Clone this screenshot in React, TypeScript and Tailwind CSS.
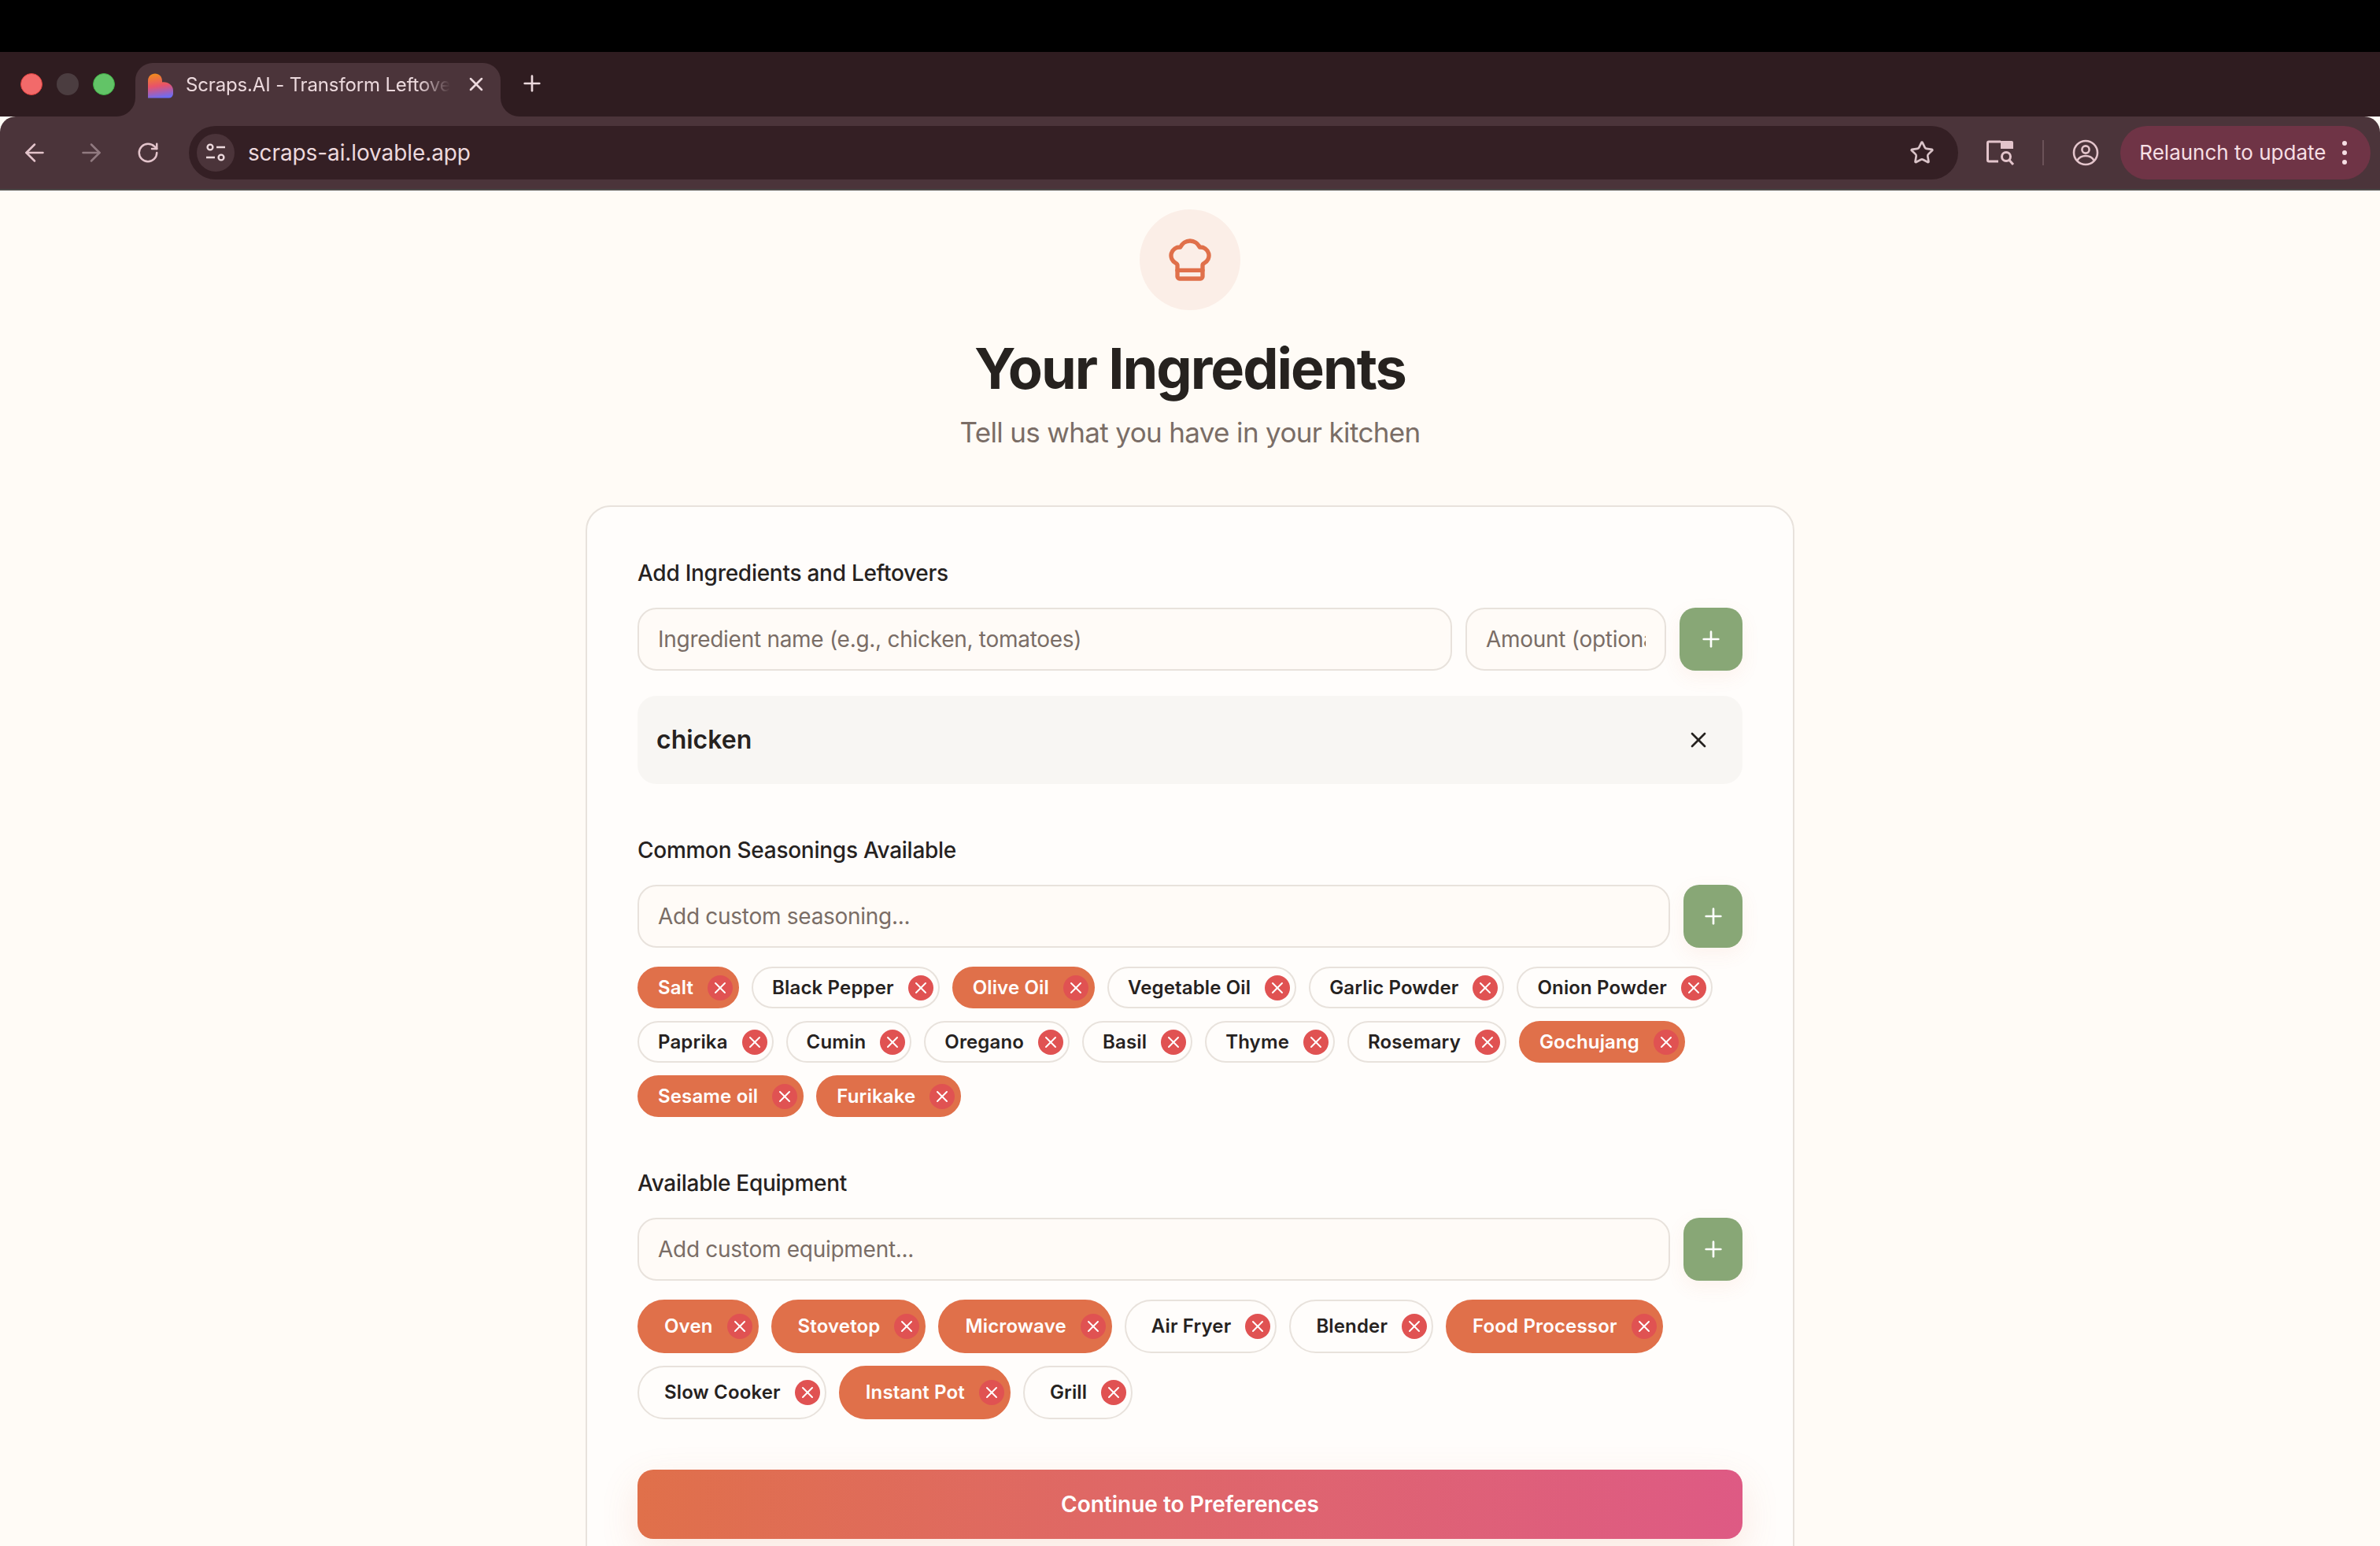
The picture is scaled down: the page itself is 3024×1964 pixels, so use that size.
import React from 'react';
import { ArrowLeft, ArrowRight, ChefHat, Plus, RotateCw, Star, X } from 'lucide-react';

const seasonings = [
  { name: 'Salt', on: true },
  { name: 'Black Pepper', on: false },
  { name: 'Olive Oil', on: true },
  { name: 'Vegetable Oil', on: false },
  { name: 'Garlic Powder', on: false },
  { name: 'Onion Powder', on: false },
  { name: 'Paprika', on: false },
  { name: 'Cumin', on: false },
  { name: 'Oregano', on: false },
  { name: 'Basil', on: false },
  { name: 'Thyme', on: false },
  { name: 'Rosemary', on: false },
  { name: 'Gochujang', on: true },
  { name: 'Sesame oil', on: true },
  { name: 'Furikake', on: true },
];

const equipment = [
  { name: 'Oven', on: true },
  { name: 'Stovetop', on: true },
  { name: 'Microwave', on: true },
  { name: 'Air Fryer', on: false },
  { name: 'Blender', on: false },
  { name: 'Food Processor', on: true },
  { name: 'Slow Cooker', on: false },
  { name: 'Instant Pot', on: true },
  { name: 'Grill', on: false },
];

const Favicon = () => (
  <svg width="32" height="32" viewBox="0 0 32 32" className="shrink-0">
    <defs>
      <linearGradient id="fav" x1="0.35" y1="0" x2="0.5" y2="1">
        <stop offset="0" stopColor="#f08a1e" />
        <stop offset="0.5" stopColor="#e8526a" />
        <stop offset="1" stopColor="#6a6cf6" />
      </linearGradient>
    </defs>
    <path
      d="M0 10C0 4 4 0.5 9 0.5S18 4 18 10V11.5C25 10.5 32 15 32 22V26a5.5 5.5 0 0 1-5.5 5.5H0Z"
      fill="url(#fav)"
    />
  </svg>
);

const TuneIcon = () => (
  <svg width="26" height="26" viewBox="0 0 26 26" fill="none" stroke="#ecd9dd" strokeWidth="2.4">
    <circle cx="6" cy="6" r="3.4" />
    <path d="M14 6h11M1 19h11" />
    <circle cx="20" cy="19" r="3.4" />
  </svg>
);

const SidePanelSearch = () => (
  <svg width="36" height="32" viewBox="0 0 36 32" fill="none">
    <path d="M18 2H3a1.5 1.5 0 0 0-1.5 1.5v22A1.5 1.5 0 0 0 3 27h12" stroke="#e3c4cb" strokeWidth="3" />
    <path d="M18 1h14a2 2 0 0 1 2 2v8H18Z" fill="#e3c4cb" />
    <circle cx="25" cy="21" r="5.5" stroke="#e3c4cb" strokeWidth="3" />
    <path d="M29 25.5l5 5.5" stroke="#e3c4cb" strokeWidth="3" />
  </svg>
);

const ProfileIcon = () => (
  <svg width="34" height="34" viewBox="0 0 34 34" fill="none" stroke="#e3c4cb" strokeWidth="2.6">
    <circle cx="17" cy="17" r="15" />
    <circle cx="17" cy="13" r="4.6" />
    <path d="M6.5 26.5C9 22.5 13 21 17 21s8 1.5 10.5 5.5" />
  </svg>
);

const Chip = ({ name, on, big }: { name: string; on: boolean; big?: boolean }) => (
  <div
    className={`flex items-center rounded-full border-2 text-[24px] leading-[32px] font-semibold ${
      big ? 'h-[68px] pl-[32px] pr-[6px] gap-[18px]' : 'h-[53px] pl-[24px] pr-[6px] gap-[18px]'
    } ${on ? 'bg-[#e0704a] border-[#e0704a] text-white' : 'bg-[#fffdfb] border-[#e8e2dc] text-[#26221f]'}`}
  >
    <span className="tracking-[0.15px]">{name}</span>
    <span className="flex h-[32px] w-[32px] items-center justify-center rounded-full bg-[#e05252]">
      <X size={24} color="#ffffff" strokeWidth={2} />
    </span>
  </div>
);

const AddButton = ({ wide }: { wide?: boolean }) => (
  <button
    className={`flex h-[80px] shrink-0 items-center justify-center rounded-[20px] bg-[#88a776] shadow-[0_8px_24px_rgba(224,112,74,0.08)] ${
      wide ? 'w-[80px]' : 'w-[75px]'
    }`}
  >
    <Plus size={32} color="#ffffff" strokeWidth={2} />
  </button>
);

const TextField = ({ placeholder, className }: { placeholder: string; className: string }) => (
  <input
    placeholder={placeholder}
    className={`h-[80px] min-w-0 rounded-[24px] border-2 border-[#e8e2dc] bg-[#fffbf7] px-[24px] text-[28px] tracking-[-0.28px] outline-none placeholder:text-[#7a6d66] ${className}`}
  />
);

const App = () => {
  return (
    <div className="h-[1964px] w-[3024px] overflow-hidden bg-[#fffbf6] font-[Inter,sans-serif]">
      <div className="h-[66px] bg-black" />

      {/* tab strip */}
      <div className="flex h-[82px] items-end bg-[#2f1c20]">
        <div className="flex h-[82px] w-[172px] items-center gap-[18px] pl-[26px]">
          <span className="h-[28px] w-[28px] rounded-full border border-[#e0413f] bg-[#f26a6a]" />
          <span className="h-[28px] w-[28px] rounded-full bg-[#4b3d40]" />
          <span className="h-[28px] w-[28px] rounded-full border border-[#3fae44] bg-[#62c467]" />
        </div>
        <div className="relative flex h-[68px] w-[464px] items-start rounded-t-[22px] bg-[#4b343a] pl-[16px] pt-[13px]">
          <span className="absolute -left-[24px] bottom-0 h-[24px] w-[24px] bg-[#4b343a]" />
          <span className="absolute -left-[24px] bottom-0 h-[24px] w-[24px] rounded-br-[24px] bg-[#2f1c20]" />
          <span className="absolute -right-[24px] bottom-0 h-[24px] w-[24px] bg-[#4b343a]" />
          <span className="absolute -right-[24px] bottom-0 h-[24px] w-[24px] rounded-bl-[24px] bg-[#2f1c20]" />
          <Favicon />
          <span className="ml-[16px] mt-[1px] w-[336px] overflow-hidden whitespace-nowrap text-[24px] leading-[28px] tracking-[-0.15px] text-[#ecd9dd] [mask-image:linear-gradient(to_right,black_88%,transparent_100%)]">
            Scraps.AI - Transform Leftovers
          </span>
          <X size={28} color="#ecd9dd" strokeWidth={2.2} className="ml-[19px]" />
        </div>
        <Plus size={32} color="#ecd9dd" strokeWidth={2} className="mb-[26px] ml-[24px]" />
      </div>

      {/* toolbar */}
      <div className="flex h-[94px] items-center rounded-t-[20px] border-b-2 border-[#4d4a4a] bg-[#4b343a] pl-[26px] pr-[12px]">
        <ArrowLeft size={36} color="#e3c4cb" strokeWidth={1.7} />
        <ArrowRight size={36} color="#917a80" strokeWidth={1.7} className="ml-[36px]" />
        <RotateCw size={30} color="#e3c4cb" strokeWidth={2} className="ml-[39px]" />
        <div className="ml-[37px] flex h-[68px] w-[2251px] items-center rounded-full bg-[#341f24] pl-[10px] pr-[30px]">
          <span className="flex h-[48px] w-[48px] items-center justify-center rounded-full bg-[#4b343a]">
            <TuneIcon />
          </span>
          <span className="ml-[17px] text-[28px] leading-[36px] tracking-[-0.1px] text-[#ecd9dd]">scraps-ai.lovable.app</span>
          <Star size={32} color="#d9c3c8" strokeWidth={2} className="ml-auto" />
        </div>
        <span className="ml-[36px]">
          <SidePanelSearch />
        </span>
        <span className="ml-[35px] h-[32px] w-[2px] bg-[#6b5258]" />
        <span className="ml-[36px]">
          <ProfileIcon />
        </span>
        <div className="ml-[27px] flex h-[68px] w-[318px] items-center rounded-full bg-[#6f3446] pl-[24px]">
          <span className="whitespace-nowrap text-[26px] leading-[34px] text-[#f6dfe4]">Relaunch to update</span>
          <span className="ml-[21px] flex flex-col gap-[6px]">
            <span className="h-[6px] w-[6px] rounded-full bg-[#f6dfe4]" />
            <span className="h-[6px] w-[6px] rounded-full bg-[#f6dfe4]" />
            <span className="h-[6px] w-[6px] rounded-full bg-[#f6dfe4]" />
          </span>
        </div>
      </div>

      {/* page */}
      <div className="flex flex-col items-center pt-[24px]">
        <div className="flex h-[128px] w-[128px] items-center justify-center rounded-full bg-[#fbeee7]">
          <ChefHat size={64} color="#e0704a" />
        </div>
        <h1 className="mt-[30px] text-[72px] leading-[88px] font-bold tracking-[-2px] text-[#26221f]">
          Your Ingredients
        </h1>
        <p className="mt-[11px] text-[35px] leading-[52px] tracking-[-0.65px] text-[#7a6d66]">Tell us what you have in your kitchen</p>

        <div className="mt-[67px] flex w-[1536px] flex-col rounded-[32px] border-2 border-[#e8e2dc] bg-[#fffdfb] px-[64px] pt-[64px] pb-[64px]">
          <label className="text-[28px] leading-[40px] font-medium tracking-[-0.27px] text-[#26221f]">Add Ingredients and Leftovers</label>
          <div className="mt-[24px] flex gap-[17px]">
            <TextField placeholder="Ingredient name (e.g., chicken, tomatoes)" className="flex-1" />
            <TextField placeholder="Amount (optional)" className="w-[255px]" />
            <AddButton wide />
          </div>
          <div className="mt-[32px] flex h-[112px] items-center justify-between rounded-[24px] bg-[#f8f6f3] pl-[24px] pr-[40px]">
            <span className="text-[32px] font-semibold text-[#26221f]">chicken</span>
            <X size={32} color="#26221f" strokeWidth={2} />
          </div>

          <label className="mt-[64px] text-[28px] leading-[40px] font-medium tracking-[-0.27px] text-[#26221f]">Common Seasonings Available</label>
          <div className="mt-[24px] flex gap-[17px]">
            <TextField placeholder="Add custom seasoning..." className="flex-1" />
            <AddButton />
          </div>
          <div className="mt-[24px] flex flex-wrap gap-[16px]">
            {seasonings.map((item) => (
              <Chip key={item.name} name={item.name} on={item.on} />
            ))}
          </div>

          <label className="mt-[64px] text-[28px] leading-[40px] font-medium tracking-[-0.27px] text-[#26221f]">Available Equipment</label>
          <div className="mt-[24px] flex gap-[17px]">
            <TextField placeholder="Add custom equipment..." className="flex-1" />
            <AddButton />
          </div>
          <div className="mt-[24px] flex flex-wrap gap-[16px]">
            {equipment.map((item) => (
              <Chip key={item.name} name={item.name} on={item.on} big />
            ))}
          </div>

          <button className="mt-[64px] h-[88px] shrink-0 rounded-[20px] bg-gradient-to-r from-[#e0704a] to-[#de5a84] text-[28px] font-semibold text-white shadow-[0_16px_48px_rgba(224,112,74,0.15)]">
            Continue to Preferences
          </button>
        </div>
      </div>
    </div>
  );
};

export default App;
